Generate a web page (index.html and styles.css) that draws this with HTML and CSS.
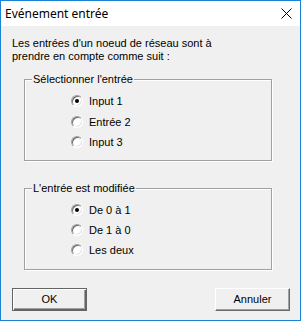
FILE: index.html
```html
<!DOCTYPE html>
<html lang="fr">
<head>
  <meta charset="UTF-8" />
  <title>Evénement entrée</title>
  <link rel="stylesheet" href="styles.css">
</head>
<body>
  <div class="window">
    <div class="titlebar">
      <span class="title">Evénement entrée</span>
      <svg class="close" width="11" height="11" viewBox="0 0 11 11">
        <path d="M0.5 0.5 L10.5 10.5 M10.5 0.5 L0.5 10.5" stroke="#000" stroke-width="1" fill="none" />
      </svg>
    </div>

    <div class="content">
      <p class="intro">Les entrées d'un noeud de réseau sont à<br />prendre en compte comme suit :</p>

      <!-- Choix de l'entrée -->
      <fieldset class="group first">
        <legend>Sélectionner l'entrée</legend>
        <div class="options">
          <div class="option checked"><span class="radio"></span>Input 1</div>
          <div class="option"><span class="radio"></span>Entrée 2</div>
          <div class="option"><span class="radio"></span>Input 3</div>
        </div>
      </fieldset>

      <!-- Front -->
      <fieldset class="group second">
        <legend>L'entrée est modifiée</legend>
        <div class="options">
          <div class="option checked"><span class="radio"></span>De 0 à 1</div>
          <div class="option"><span class="radio"></span>De 1 à 0</div>
          <div class="option"><span class="radio"></span>Les deux</div>
        </div>
      </fieldset>

      <div class="buttons">
        <button class="btn default">OK</button>
        <button class="btn">Annuler</button>
      </div>
    </div>
  </div>
</body>
</html>
```

FILE: styles.css
```css
html, body {
  margin: 0;
  padding: 0;
}

body {
  font-family: "Liberation Sans", Arial, sans-serif;
  font-size: 11px;
  color: #000;
  background: #f0f0f0;
}

.window {
  width: 301px;
  height: 321px;
  box-sizing: border-box;
  border: 1px solid #1883d7;
  background: #f0f0f0;
}

.titlebar {
  height: 25px;
  background: #fff;
  display: flex;
  align-items: center;
  justify-content: space-between;
  padding: 0 8px 0 4px;
}

.title {
  font-family: "Noto Sans", sans-serif;
  font-size: 12px;
  line-height: 16px;
}

.close {
  display: block;
}

.content {
  padding: 0 10px 0 11px;
}

.intro {
  margin: 11px 0 0 0;
  line-height: 13px;
}

.group {
  margin: 10px 18px 0 12px;
  padding: 0;
  border: 1px solid #a0a0a0;
  box-shadow: 1px 1px 0 #fff, inset 1px 1px 0 #fff;
}

.group.second {
  margin-top: 21px;
}

.group legend {
  margin-left: 7px;
  padding: 0 1px;
  line-height: 13px;
  background: #f0f0f0;
}

.options {
  padding: 5px 0 7px 46px;
}

.second .options {
  padding-bottom: 9px;
}

.option {
  display: flex;
  align-items: center;
  height: 20px;
}

.group.first .option {
  height: 20.5px;
}

.radio {
  width: 12px;
  height: 12px;
  margin-right: 6px;
  box-sizing: border-box;
  border-radius: 50%;
  border: 1px solid;
  border-color: #a0a0a0 #fff #fff #a0a0a0;
  background: #fff;
  box-shadow: inset 1px 1px 0 #696969, inset -1px -1px 0 #e3e3e3;
  position: relative;
}

.option.checked .radio::after {
  content: "";
  position: absolute;
  left: 3px;
  top: 3px;
  width: 4px;
  height: 4px;
  border-radius: 50%;
  background: #000;
}

.buttons {
  display: flex;
  justify-content: space-between;
  margin-top: 18px;
}

.btn {
  font-family: "Liberation Sans", Arial, sans-serif;
  font-size: 11px;
  width: 75px;
  height: 23px;
  padding: 0;
  background: #f0f0f0;
  color: #000;
  border: 1px solid;
  border-color: #fff #696969 #696969 #fff;
  box-shadow: inset -1px -1px 0 #a0a0a0;
}

.btn.default {
  border: 1px solid #646464;
  box-shadow: inset 1px 1px 0 #fff, inset -1px -1px 0 #646464, inset -2px -2px 0 #a0a0a0;
}
```
